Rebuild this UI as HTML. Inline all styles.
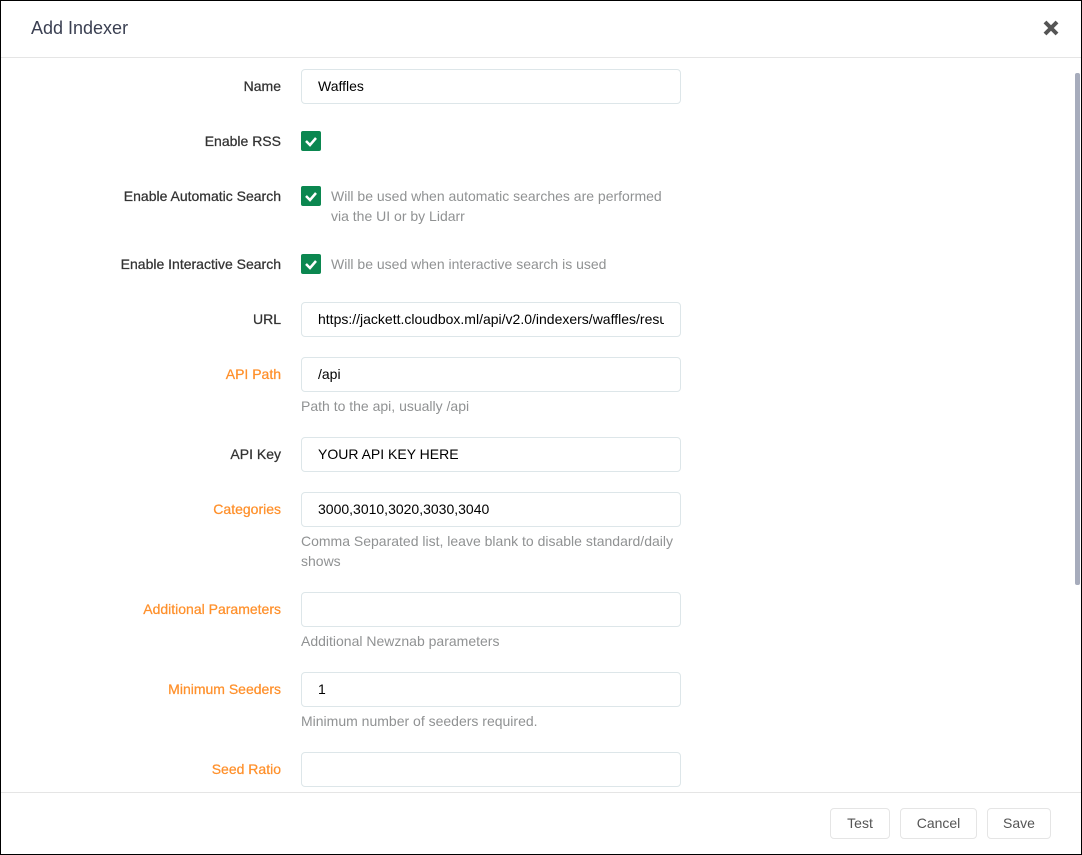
<!DOCTYPE html>
<html><head><style>
*{box-sizing:border-box}
body{margin:0;width:1082px;height:855px;overflow:hidden;font-family:"Liberation Sans",sans-serif;background:#fff;}
.frame{position:absolute;left:0;top:0;width:1082px;height:855px;border:1px solid #000;}
.hdr{position:absolute;left:1px;top:1px;width:1080px;height:57px;border-bottom:1px solid #e5e5e5;}
.hdr h1{position:absolute;left:30px;top:17px;margin:0;font-weight:normal;font-size:18px;color:#3a3f51;}
.x{position:absolute;left:1042px;top:19px;}
.lbl{position:absolute;right:801px;font-size:14px;color:#333;text-align:right;white-space:nowrap;-webkit-text-stroke:0.25px #333}
.lbl.o{color:#ff902b;-webkit-text-stroke:0.25px #ff902b}
.inp{position:absolute;left:301px;width:380px;height:35px;border:1px solid #dde6e9;border-radius:4px;padding:8px 16px;font-size:14px;color:#000;white-space:nowrap;overflow:hidden}
.inp span{display:block;overflow:hidden;width:346px}
.cb{position:absolute;left:301px;width:20px;height:20px;background:#0b8750;border-radius:2px}
.help{position:absolute;left:301px;font-size:14px;color:#909293;line-height:20px}
.cbt{position:absolute;left:331px;font-size:14px;color:#909293;line-height:20px}
.sb{position:absolute;left:1075px;top:73px;width:5px;height:512px;background:#a7acbc;border-radius:2px}
.ftr{position:absolute;left:1px;top:792px;width:1080px;border-top:1px solid #e5e5e5;height:62px}
.btn{position:absolute;top:808px;height:31px;border:1px solid #e5e5e5;border-radius:4px;font-size:14px;color:#555;text-align:center;line-height:29px}
</style></head><body>
<div class="frame"></div>
<div class="hdr"><h1>Add Indexer</h1>
<svg class="x" width="16" height="16" viewBox="0 0 16 16"><path d="M2 2L14 14M14 2L2 14" stroke="#555" stroke-width="4"/></svg></div>

<div class="lbl" style="top:78px">Name</div><div class="inp" style="top:69px">Waffles</div>
<div class="lbl" style="top:133px">Enable RSS</div>
<div class="cb" style="top:131px"><svg width="20" height="20"><path d="M5 10l4 4 6-7" stroke="#fff" stroke-width="2.5" fill="none"/></svg></div>
<div class="lbl" style="top:188px">Enable Automatic Search</div>
<div class="cb" style="top:186px"><svg width="20" height="20"><path d="M5 10l4 4 6-7" stroke="#fff" stroke-width="2.5" fill="none"/></svg></div>
<div class="cbt" style="top:186px">Will be used when automatic searches are performed<br>via the UI or by Lidarr</div>
<div class="lbl" style="top:256px">Enable Interactive Search</div>
<div class="cb" style="top:254px"><svg width="20" height="20"><path d="M5 10l4 4 6-7" stroke="#fff" stroke-width="2.5" fill="none"/></svg></div>
<div class="cbt" style="top:254px">Will be used when interactive search is used</div>
<div class="lbl" style="top:311px">URL</div><div class="inp" style="top:302px"><span>https://jackett.cloudbox.ml/api/v2.0/indexers/waffles/results</span></div>
<div class="lbl o" style="top:366px">API Path</div><div class="inp" style="top:357px">/api</div>
<div class="help" style="top:396px">Path to the api, usually /api</div>
<div class="lbl" style="top:446px">API Key</div><div class="inp" style="top:437px">YOUR API KEY HERE</div>
<div class="lbl o" style="top:501px">Categories</div><div class="inp" style="top:492px">3000,3010,3020,3030,3040</div>
<div class="help" style="top:531px">Comma Separated list, leave blank to disable standard/daily<br>shows</div>
<div class="lbl o" style="top:601px">Additional Parameters</div><div class="inp" style="top:592px"></div>
<div class="help" style="top:631px">Additional Newznab parameters</div>
<div class="lbl o" style="top:681px">Minimum Seeders</div><div class="inp" style="top:672px">1</div>
<div class="help" style="top:711px">Minimum number of seeders required.</div>
<div class="lbl o" style="top:761px">Seed Ratio</div><div class="inp" style="top:752px;height:35px"></div>
<div class="sb"></div>
<div class="ftr" style="background:#fff"></div>
<div class="btn" style="left:830px;width:60px">Test</div>
<div class="btn" style="left:900px;width:77px">Cancel</div>
<div class="btn" style="left:987px;width:64px">Save</div>
</body></html>
